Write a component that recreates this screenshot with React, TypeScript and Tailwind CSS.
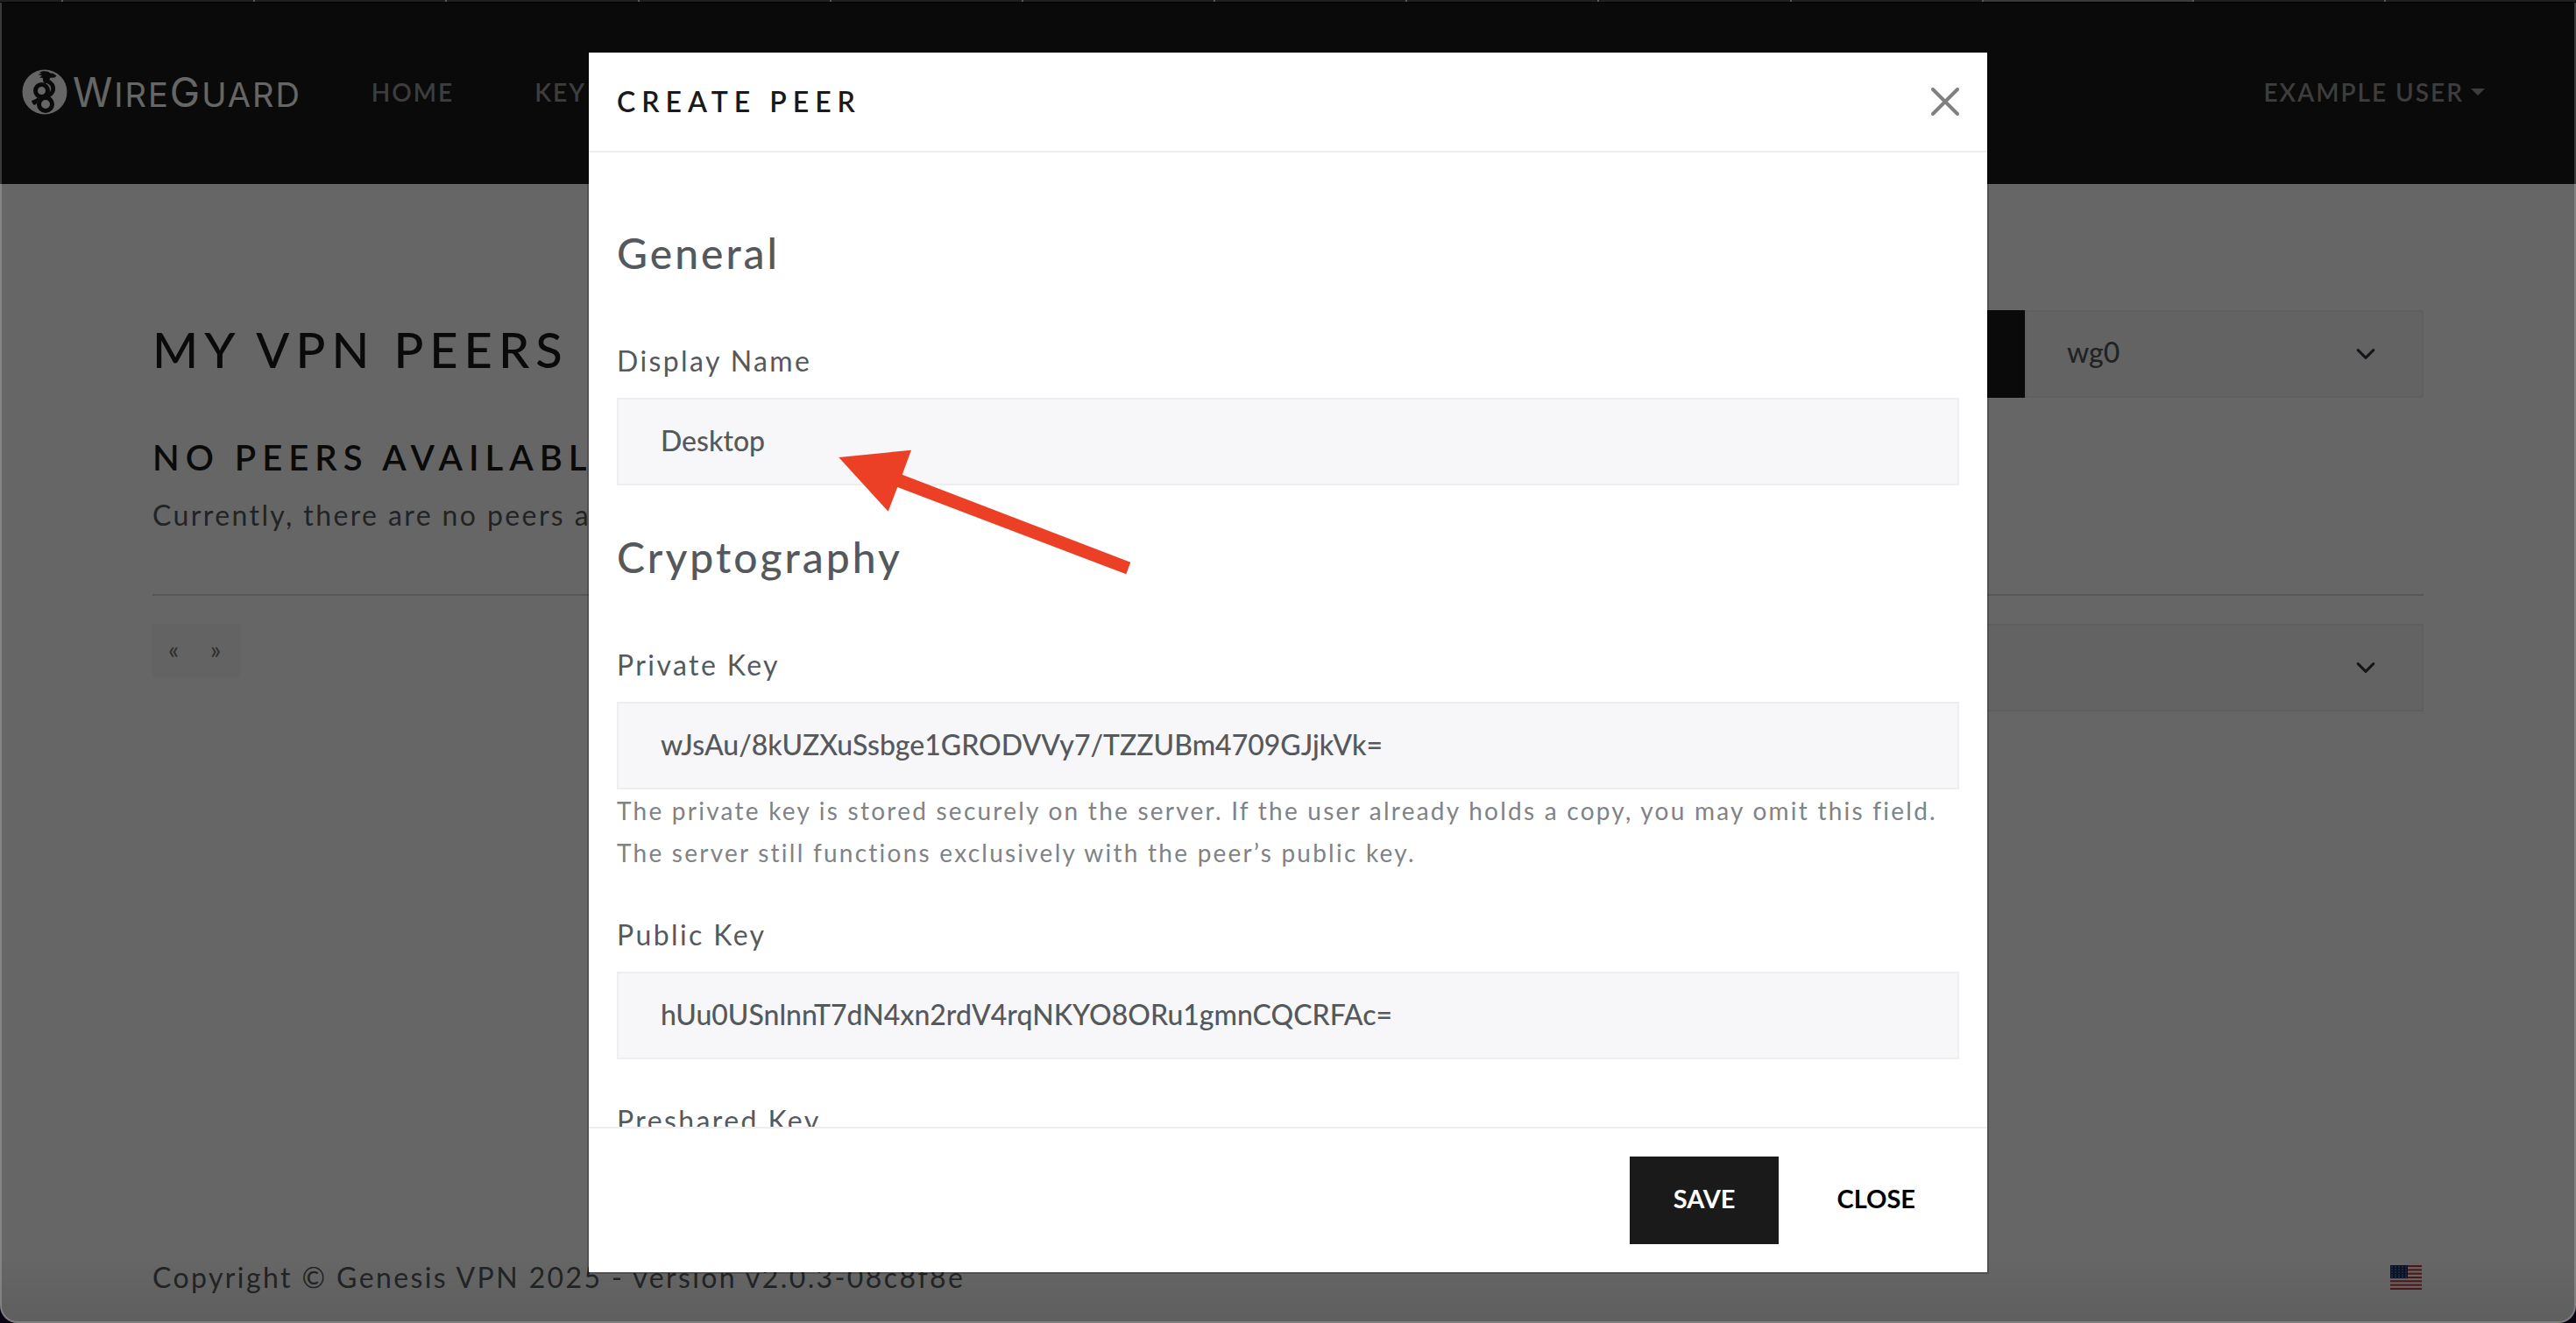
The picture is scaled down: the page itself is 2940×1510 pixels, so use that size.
import type { ReactNode } from "react";

function Chevron() {
  return (
    <svg
      className="pointer-events-none absolute right-[52px] top-1/2 h-7 w-7 -translate-y-1/2"
      viewBox="0 0 16 16"
      fill="none"
      stroke="#343a40"
      strokeWidth="1.800"
      strokeLinecap="round"
      strokeLinejoin="round"
      aria-hidden="true"
    >
      <path d="m3 5.500 5 5 5-5" />
    </svg>
  );
}

function DragonMark() {
  return (
    <svg className="h-[52px] w-[52px] shrink-0" viewBox="0 0 52 52" aria-hidden="true">
      <circle cx="26" cy="26" r="25.500" fill="#fff" />
      <g fill="none" stroke="#1a1a1a" strokeLinecap="round">
        <path d="M29 13.500c5 2 7.500 6 6.500 10.500-1 4-4 6-8.500 8" strokeWidth="5" />
        <circle cx="22.500" cy="24.500" r="7" strokeWidth="5" />
        <circle cx="27" cy="40" r="7.500" strokeWidth="5" />
        <path d="M18 34c-2 1.500-3 3-3.200 5" strokeWidth="3" />
      </g>
      <path
        d="M20 3.500c4-2 8-1.500 10.500-.5 1 1.600 3 1.600 5 1.800l4 2.700-2 2-5 .3c-1 2-2 3-1 5l-5 1.700c-2-1.500-3-4-2.500-6.500l-4-.5 3-2-4.500-1.500 4-1z"
        fill="#1a1a1a"
      />
      <path d="m11 36 5-2 2 4-4 3-2-2z" fill="#1a1a1a" />
    </svg>
  );
}

function Flag() {
  const stripes = [0, 1, 2, 3, 4, 5, 6];
  const stars = [2, 6, 10, 14, 18];
  return (
    <svg className="h-7 w-9" viewBox="0 0 36 28" preserveAspectRatio="none" aria-hidden="true">
      <rect width="36" height="28" fill="#fff" />
      {stripes.map((i) => (
        <rect key={i} y={(i * 2 * 28) / 13} width="36" height={28 / 13} fill="#bd3d44" />
      ))}
      <rect width="20" height="15.100" fill="#192f5d" />
      {stars.map((x) =>
        [2, 5, 8, 11, 13.5].map((y) => (
          <circle key={`${x}-${y}`} cx={x} cy={y} r="0.600" fill="#fff" />
        )),
      )}
    </svg>
  );
}

function TabStrip() {
  return (
    <div className="pointer-events-none fixed inset-x-0 top-0 z-30 border-b border-black" aria-hidden="true">
      <div className="flex h-0.5 bg-[#202020]">
        <div className="w-[72px] border-r-2 border-[#5a5a5a]" />
        {[1, 2, 3, 4, 5, 6, 7, 8, 9, 10].map((n) => (
          <div key={n} className="flex-1 border-r-2 border-[#5a5a5a]" />
        ))}
        <div className="w-[240px] border-r-2 border-[#5a5a5a] bg-[#3a3a3a]" />
        <div className="flex-1 border-r-2 border-[#5a5a5a]" />
        <div className="flex-1" />
      </div>
    </div>
  );
}

function SectionTitle({ children }: { children: ReactNode }) {
  return <h2 className="text-[48px] font-medium leading-[58px] tracking-[3px]">{children}</h2>;
}

function Field({ id, label, value, help }: { id: string; label: string; value: string; help?: string }) {
  return (
    <div>
      <label htmlFor={id} className="mb-[18px] block text-[32px] leading-[48px] tracking-[0.075em]">
        {label}
      </label>
      <input
        id={id}
        type="text"
        defaultValue={value}
        className="block h-[100px] w-full border-2 border-[#eceeef] bg-[#f7f7f9] px-12 pb-1 text-[32px] font-medium text-[#55595c] outline-none"
      />
      {help && <p className="text-[28px] leading-[48px] tracking-[0.08em] text-[#808385]">{help}</p>}
    </div>
  );
}

function CreatePeerDialog() {
  return (
    <div className="fixed inset-0 z-10 flex items-start justify-center bg-black/60 pb-14 pt-[58px]">
      <div
        role="dialog"
        aria-modal="true"
        aria-labelledby="dialog-title"
        className="relative flex max-h-full w-full max-w-[1600px] flex-col border-2 border-black/20 bg-white bg-clip-padding"
      >
        <header className="flex items-center justify-between border-b-2 border-[#eceeef] p-8">
          <h1 id="dialog-title" className="text-[32px] font-semibold leading-[48px] tracking-[7px] text-[#1a1a1a]">
            CREATE PEER
          </h1>
          <button type="button" aria-label="Close dialog">
            <svg className="h-8 w-8" viewBox="0 0 32 32" stroke="#808080" strokeWidth="4" strokeLinecap="round" aria-hidden="true">
              <path d="m2 2 28 28M30 2 2 30" />
            </svg>
          </button>
        </header>
        <form className="min-h-0 flex-1 overflow-y-auto px-8 pb-8 pt-[86px] text-[#55595c] [scrollbar-width:none]">
          <SectionTitle>General</SectionTitle>
          <div className="mb-[53px] mt-[70px]">
            <Field id="display-name" label="Display Name" value="Desktop" />
          </div>
          <SectionTitle>Cryptography</SectionTitle>
          <div className="mt-[70px] flex flex-col gap-[46px]">
            <Field
              id="private-key"
              label="Private Key"
              value="wJsAu/8kUZXuSsbge1GRODVVy7/TZZUBm4709GJjkVk="
              help="The private key is stored securely on the server. If the user already holds a copy, you may omit this field. The server still functions exclusively with the peer’s public key."
            />
            <Field id="public-key" label="Public Key" value="hUu0USnlnnT7dN4xn2rdV4rqNKYO8ORu1gmnCQCRFAc=" />
            <Field id="preshared-key" label="Preshared Key" value="" />
          </div>
        </form>
        <footer className="flex justify-end gap-4 border-t-2 border-[#eceeef] p-8 text-[29px] font-bold">
          <button type="button" className="h-[100px] bg-[#1a1a1a] px-[50px] pb-1 text-white">
            SAVE
          </button>
          <button type="button" className="h-[100px] px-[50px] pb-1 text-black">
            CLOSE
          </button>
        </footer>
        <svg
          className="pointer-events-none absolute left-[284px] top-[452px] h-[144px] w-[336px]"
          viewBox="956 512 336 144"
          fill="#eb4025"
          aria-hidden="true"
        >
          <path d="M957.300 522 1040 513.700 1029.700 541.700 1290.300 641.700 1285.300 655.300 1024.300 556 1013.700 583.700Z" />
        </svg>
      </div>
    </div>
  );
}

export default function App() {
  return (
    <div className="flex min-h-screen flex-col bg-white font-['Lato','Open_Sans',sans-serif] text-[#55595c]">
      <TabStrip />
      <nav className="flex h-[210px] items-center bg-[#1a1a1a] pl-[25px] pr-[104px] text-[28px] font-semibold tracking-[2px] text-[#999]">
        <a href="#home" className="flex items-center gap-1.5 text-white" aria-label="WireGuard">
          <DragonMark />
          <span className="font-['Inter',sans-serif] text-[38px] font-normal leading-none">
            <span className="text-[46px]">W</span>IRE<span className="text-[46px]">G</span>UARD
          </span>
        </a>
        <a href="#home" className="ml-20">
          HOME
        </a>
        <a href="#keygen" className="ml-[92px]">
          KEY
        </a>
        <button type="button" className="ml-auto flex items-center gap-2 tracking-[2px]">
          EXAMPLE USER
          <svg className="h-2 w-4" viewBox="0 0 16 8" fill="currentColor" aria-hidden="true">
            <path d="M0 0h16L8 8z" />
          </svg>
        </button>
      </nav>

      <main className="mx-auto w-full max-w-[2640px] flex-1 px-6 pt-36">
        <div className="flex items-center justify-between">
          <h1 className="pb-2.5 text-[56px] font-medium leading-[68px] tracking-[7px] text-[#1a1a1a]">MY VPN PEERS</h1>
          <div className="flex">
            <div className="h-[100px] w-[120px] bg-[#1a1a1a]" />
            <div className="relative">
              <select
                aria-label="Interface"
                className="h-[100px] w-[455px] appearance-none border-2 border-[#eceeef] bg-[#f7f7f9] px-[46px] pb-1 text-[32px] font-medium"
              >
                <option>wg0</option>
              </select>
              <Chevron />
            </div>
          </div>
        </div>
        <h2 className="mt-11 text-[40px] font-semibold leading-[48px] tracking-[7px] text-[#1a1a1a]">
          NO PEERS AVAILABLE
        </h2>
        <p className="mt-[18px] text-[32px] leading-[48px] tracking-[0.075em]">
          Currently, there are no peers assigned to you.
        </p>
        <hr className="mb-8 mt-[66px] border-t-2 border-[#d5d6d6]" />
        <div className="flex items-start justify-between">
          <div className="flex h-[62px] w-[100px] items-center justify-around bg-[#f7f7f9] pb-1 pr-1 text-[28px] font-medium text-[#777]">
            <button type="button" aria-label="Previous page">«</button>
            <button type="button" aria-label="Next page">»</button>
          </div>
          <div className="relative">
            <select
              aria-label="Page size"
              className="h-[100px] w-[640px] appearance-none border-2 border-[#eceeef] bg-[#f7f7f9] px-12 text-[32px]"
            />
            <Chevron />
          </div>
        </div>
      </main>

      <footer className="bg-linear-to-b from-white to-[#ececec]">
        <div className="mx-auto flex w-full max-w-[2640px] items-center justify-between px-6 pb-7">
          <p className="text-[32px] leading-[48px] tracking-[0.075em]">
            Copyright © Genesis VPN 2025 - version v2.0.3-08c8f8e
          </p>
          <button type="button" aria-label="Language: English" className="mr-0.5">
            <Flag />
          </button>
        </div>
      </footer>

      <CreatePeerDialog />
      <div
        className="pointer-events-none fixed inset-0 z-20 rounded-b-[20px] border-x-2 border-b-2 border-white/20 shadow-[0_0_0_20px_#0a0414]"
        aria-hidden="true"
      />
    </div>
  );
}
